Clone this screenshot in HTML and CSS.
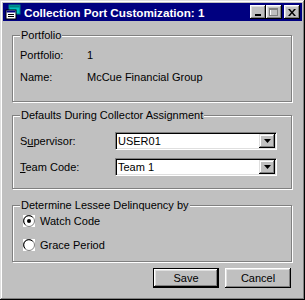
FILE: index.html
```html
<!DOCTYPE html>
<html lang="en">
   <head>
      <meta charset="UTF-8">
      <title>Collection Port Customization</title>
      <link rel="stylesheet" href="styles.css">
   </head>
   <body>
      <div class="window">
         <div class="titlebar">
            <svg class="app-icon" width="16" height="16" viewBox="0 0 16 16">
               <rect x="4" y="1" width="11" height="9" fill="#00c0c0" stroke="#008080"/>
               <rect x="4.5" y="1.5" width="10" height="2" fill="#008080"/>
               <rect x="1" y="6" width="10" height="9" fill="#fff" stroke="#000"/>
               <rect x="1.5" y="6.5" width="9" height="2" fill="#000080"/>
               <rect x="3" y="10" width="6" height="1" fill="#000"/>
               <rect x="3" y="12" width="6" height="1" fill="#000"/>
            </svg>
            <span class="title">Collection Port Customization: 1</span>
            <div class="caption-btns">
               <span class="cbtn"><svg width="8" height="7" viewBox="0 0 8 7"><rect x="1" y="5" width="6" height="2" fill="#000"/></svg></span>
               <span class="cbtn"><svg width="10" height="9" viewBox="0 0 10 9"><rect x="1.5" y="1.5" width="7" height="6" fill="none" stroke="#fff"/><rect x="0.5" y="0.5" width="8" height="7" fill="none" stroke="#808080"/><rect x="1" y="1" width="8" height="1" fill="#808080"/></svg></span>
               <span class="cbtn close"><svg width="8" height="7" viewBox="0 0 8 7"><path d="M0 0h2l2 2.5L6 0h2L5 3.5 8 7H6L4 4.5 2 7H0l3-3.5z" fill="#000"/></svg></span>
            </div>
         </div>

         <div class="content">
            <fieldset class="group portfolio">
               <legend>Portfolio</legend>
               <div class="info-row"><span class="info-label">Portfolio:</span><span>1</span></div>
               <div class="info-row"><span class="info-label">Name:</span><span>McCue Financial Group</span></div>
            </fieldset>

            <fieldset class="group defaults">
               <legend>Defaults During Collector Assignment</legend>
               <div class="field">
                  <label class="field-label">S<u>u</u>pervisor:</label>
                  <div class="combo">
                     <span class="combo-text">USER01</span>
                     <span class="combo-btn"><svg width="7" height="4" viewBox="0 0 7 4"><path d="M0 0h7L3.5 4z" fill="#000"/></svg></span>
                  </div>
               </div>
               <div class="field">
                  <label class="field-label"><u>T</u>eam Code:</label>
                  <div class="combo">
                     <span class="combo-text">Team 1</span>
                     <span class="combo-btn"><svg width="7" height="4" viewBox="0 0 7 4"><path d="M0 0h7L3.5 4z" fill="#000"/></svg></span>
                  </div>
               </div>
            </fieldset>

            <fieldset class="group delinquency">
               <legend>Determine Lessee Delinquency by</legend>
               <div class="radio-row">
                  <svg class="radio" width="12" height="12" viewBox="0 0 12 12">
                     <rect width="12" height="12" fill="#fff"/>
                     <circle cx="6" cy="6" r="5.5" fill="#fff" stroke="#808080"/>
                     <path d="M2.2 9.5A4.5 4.5 0 0 1 9.5 2.2" fill="none" stroke="#000"/>
                     <circle cx="6" cy="6" r="2" fill="#000"/>
                  </svg>
                  <span>Watch Code</span>
               </div>
               <div class="radio-row">
                  <svg class="radio" width="12" height="12" viewBox="0 0 12 12">
                     <rect width="12" height="12" fill="#fff"/>
                     <circle cx="6" cy="6" r="5.5" fill="#fff" stroke="#808080"/>
                     <path d="M2.2 9.5A4.5 4.5 0 0 1 9.5 2.2" fill="none" stroke="#000"/>
                  </svg>
                  <span>Grace Period</span>
               </div>
            </fieldset>

            <div class="actions">
               <button class="btn default">Save</button>
               <button class="btn">Cancel</button>
            </div>
         </div>
      </div>
   </body>
</html>
```

FILE: styles.css
```css
/* classic dialog look */
body {
  margin: 0;
  background-color: #c0c0c0;
  font-family: "Liberation Sans", Arial, sans-serif;
  font-size: 11px;
  color: #000;
}
.window {
  width: 305px;
  height: 300px;
  box-sizing: border-box;
  padding: 3px;
  box-shadow: inset -1px -1px #000, inset 1px 1px #dfdfdf, inset -2px -2px #808080, inset 2px 2px #fff;
}
.titlebar {
  height: 18px;
  background-color: #000080;
  color: #fff;
  display: flex;
  align-items: center;
  padding: 0 2px;
}
.app-icon {
  margin-right: 3px;
}
.title {
  font-weight: bold;
  font-size: 11.7px;
}
.caption-btns {
  margin-left: auto;
  display: flex;
}
.cbtn {
  width: 16px;
  height: 14px;
  box-sizing: border-box;
  background-color: #c0c0c0;
  box-shadow: inset -1px -1px #000, inset 1px 1px #fff, inset -2px -2px #808080, inset 2px 2px #dfdfdf;
  display: flex;
  align-items: center;
  justify-content: center;
}
.cbtn.close {
  margin-left: 2px;
}

/* content */
.content {
  padding: 7px 10px 0 9px;
}
.group {
  margin: 0;
  padding: 0 7px;
  border: 1px solid #808080;
  box-shadow: 1px 1px 0 #fff, inset 1px 1px 0 #fff;
}
.group legend {
  padding: 0 1px;
  line-height: 14px;
  background-color: #c0c0c0;
}
.portfolio {
  padding-top: 2px;
  padding-bottom: 13px;
}
.info-row {
  display: flex;
  height: 22px;
  line-height: 22px;
}
.info-label {
  width: 67px;
}
.defaults {
  margin-top: 6px;
  padding-top: 10px;
  padding-bottom: 12px;
}
.field {
  display: flex;
  align-items: center;
  height: 18px;
}
.field + .field {
  margin-top: 8px;
}
.field-label {
  width: 95px;
}
.combo {
  width: 162px;
  height: 18px;
  box-sizing: border-box;
  background-color: #fff;
  border: 1px solid;
  border-color: #808080 #fff #fff #808080;
  box-shadow: inset 1px 1px #000, inset -1px -1px #dfdfdf;
  display: flex;
  align-items: center;
  padding: 1px;
}
.combo-text {
  flex: 1;
  padding-left: 1px;
}
.combo-btn {
  width: 16px;
  height: 14px;
  box-sizing: border-box;
  background-color: #c0c0c0;
  box-shadow: inset -1px -1px #000, inset 1px 1px #dfdfdf, inset -2px -2px #808080, inset 2px 2px #fff;
  display: flex;
  align-items: center;
  justify-content: center;
}
.delinquency {
  margin-top: 9px;
  padding-top: 0;
  padding-bottom: 7px;
}
.radio-row {
  display: flex;
  align-items: center;
  height: 18px;
  padding-left: 3px;
}
.radio-row + .radio-row {
  margin-top: 6px;
}
.radio {
  margin-right: 5px;
}
.actions {
  display: flex;
  justify-content: flex-end;
  gap: 6px;
  margin-top: 6px;
  padding-right: 1px;
}
.btn {
  width: 66px;
  height: 20px;
  box-sizing: border-box;
  font-family: "Liberation Sans", Arial, sans-serif;
  font-size: 11px;
  color: #000;
  background-color: #c0c0c0;
  border: none;
  padding: 0;
  box-shadow: inset -1px -1px #000, inset 1px 1px #fff, inset -2px -2px #808080, inset 2px 2px #dfdfdf;
}
.btn.default {
  border: 1px solid #000;
}
```
